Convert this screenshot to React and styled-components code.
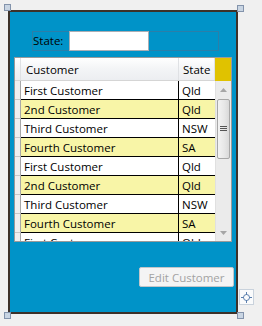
import styled, { createGlobalStyle } from 'styled-components';

const GlobalStyle = createGlobalStyle`
  html, body {
    margin: 0;
    padding: 0;
    background: #f0f0f0;
  }
  body {
    font-family: "Open Sans", "Noto Sans", sans-serif;
    font-size: 11.5px;
    color: #000;
  }
`;

const rows = [
  ['First Customer', 'Qld'],
  ['2nd Customer', 'Qld'],
  ['Third Customer', 'NSW'],
  ['Fourth Customer', 'SA'],
  ['First Customer', 'Qld'],
  ['2nd Customer', 'Qld'],
  ['Third Customer', 'NSW'],
  ['Fourth Customer', 'SA'],
  ['First Customer', 'Qld'],
];

const Canvas = styled.div`
  position: relative;
  width: 262px;
  height: 326px;
  padding: 10px 0 0 8px;
  box-sizing: border-box;
`;

const Handle = styled.div`
  position: absolute;
  width: 5px;
  height: 5px;
  background: #c9d5e3;
  border: 1px solid #8393ab;
  left: ${p => p.$x}px;
  top: ${p => p.$y}px;
`;

const Window = styled.div`
  width: 230px;
  height: 304px;
  box-sizing: border-box;
  border: 2px solid #3d3129;
  background: #0093c8;
  padding: 19px 2px 0 4px;
  display: flex;
  flex-direction: column;
`;

const StateBar = styled.div`
  margin-left: 18px;
  width: 187px;
  height: 20px;
  box-sizing: border-box;
  border: 1px solid #2b7fa9;
  display: flex;
  align-items: center;
  gap: 6px;
  padding-left: 0;
`;

const Label = styled.span`
  line-height: 18px;
`;

const TextInput = styled.div`
  width: 80px;
  height: 20px;
  box-sizing: border-box;
  background: #fff;
  border: 1px solid #abadb3;
  margin-top: -1px;
  margin-bottom: -1px;
`;

const Grid = styled.div`
  margin-top: 6px;
  width: 218px;
  height: 185px;
  box-sizing: border-box;
  border: 1px solid #9a9a9a;
  background: #fff;
  display: grid;
  grid-template-columns: 1fr 16px;
  grid-template-rows: 23px 1fr;
  overflow: hidden;
`;

const HeaderRow = styled.div`
  display: grid;
  grid-template-columns: 6px 158px 1fr;
  border-bottom: 1px solid #d5d5d5;
`;

const HeaderCell = styled.div`
  background: linear-gradient(#ffffff, #f3f4f6 50%, #eceef1);
  border-right: 1px solid #dfe1e4;
  padding-left: ${p => p.$pad || 4}px;
  display: flex;
  align-items: center;
`;

const Corner = styled.div`
  background: #e0c200;
`;

const Body = styled.div`
  overflow: hidden;
`;

const Row = styled.div`
  display: grid;
  grid-template-columns: 6px 158px 1fr;
  height: 19px;
`;

const RowHead = styled.div`
  background: #efefef;
  border-right: 1px solid #a8a8a8;
  border-bottom: 1px solid #c8c8c8;
`;

const Cell = styled.div`
  background: ${p => (p.$alt ? '#f8f5a7' : '#fff')};
  border-bottom: 1px solid #000;
  border-right: ${p => (p.$last ? 'none' : '1px solid #000')};
  padding-left: 3px;
  display: flex;
  align-items: center;
  white-space: nowrap;
  overflow: hidden;
`;

const ScrollBar = styled.div`
  background: #ebebeb;
  border-left: 1px solid #e0e0e0;
  display: flex;
  flex-direction: column;
  align-items: center;
`;

const Arrow = styled.div`
  height: 17px;
  display: flex;
  align-items: center;
  justify-content: center;
`;

const Thumb = styled.div`
  width: 13px;
  height: 60px;
  box-sizing: border-box;
  margin-top: 1px;
  border: 1px solid #a7a7a7;
  border-radius: 2px;
  background: linear-gradient(90deg, #f3f3f3, #e6e6e6 60%, #d9d9d9);
  display: flex;
  align-items: center;
  justify-content: center;
`;

const Spacer = styled.div`
  flex: 1;
`;

const Footer = styled.div`
  display: flex;
  justify-content: flex-end;
  margin-top: 25px;
`;

const Button = styled.div`
  width: 95px;
  height: 20px;
  box-sizing: border-box;
  border: 1px solid #c2c6c9;
  border-radius: 2px;
  background: #f4f4f4;
  color: #a3a3a3;
  display: flex;
  align-items: center;
  justify-content: center;
`;

const Target = styled.div`
  position: absolute;
  left: 239px;
  top: 289px;
  width: 15px;
  height: 16px;
  box-sizing: border-box;
  background: #fafbfc;
  border: 1px solid #c9d2dc;
  display: flex;
  align-items: center;
  justify-content: center;
`;

const Tri = ({ down }) => (
  <svg width="7" height="4" viewBox="0 0 7 4">
    <path d={down ? 'M0 0H7L3.5 4Z' : 'M0 4H7L3.5 0Z'} fill="#a6a6a6" />
  </svg>
);

const Grip = () => (
  <svg width="7" height="6" viewBox="0 0 7 6">
    <path d="M0 0.5H7M0 2.5H7M0 4.5H7" stroke="#555" strokeWidth="1" />
  </svg>
);

const Crosshair = () => (
  <svg width="11" height="11" viewBox="0 0 11 11" fill="none" stroke="#5b7fae">
    <circle cx="5.5" cy="5.5" r="3" />
    <path d="M5.5 0V3M5.5 8V11M0 5.5H3M8 5.5H11" />
  </svg>
);

export default function App() {
  return (
    <>
      <GlobalStyle />
      <Canvas>
        <Handle $x={4} $y={4} />
        <Handle $x={237} $y={5} />
        <Handle $x={4} $y={312} />
        <Handle $x={237} $y={312} />
        <Window>
          <StateBar>
            <Label>State:</Label>
            <TextInput />
          </StateBar>
          <Grid>
            <HeaderRow>
              <HeaderCell $pad={0} />
              <HeaderCell $pad={5}>Customer</HeaderCell>
              <HeaderCell $pad={4}>State</HeaderCell>
            </HeaderRow>
            <Corner />
            <Body>
              {rows.map(([name, state], i) => (
                <Row key={i}>
                  <RowHead />
                  <Cell $alt={i % 2 === 1}>{name}</Cell>
                  <Cell $alt={i % 2 === 1} $last>{state}</Cell>
                </Row>
              ))}
            </Body>
            <ScrollBar>
              <Arrow><Tri /></Arrow>
              <Thumb>
                <Grip />
              </Thumb>
              <Spacer />
              <Arrow><Tri down /></Arrow>
            </ScrollBar>
          </Grid>
          <Footer>
            <Button>Edit Customer</Button>
          </Footer>
        </Window>
        <Target>
          <Crosshair />
        </Target>
      </Canvas>
    </>
  );
}
